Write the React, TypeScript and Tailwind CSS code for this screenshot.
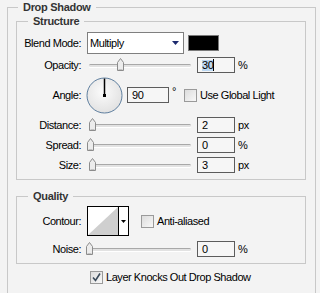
import React from 'react';

const labelCls = 'w-[64px] shrink-0 text-right';

function Thumb({ className }: { className: string }): React.JSX.Element {
  return (
    <svg className={`absolute top-0 ${className}`} width="7" height="13" viewBox="0 0 7 13">
      <path d="M0.5 12.5 V4.5 L3.5 0.5 L6.5 4.5 V12.5 Z" fill="#ececec" stroke="#8c8c8c" />
      <path d="M1.5 11.5 H5.5" stroke="#c4c4c4" />
    </svg>
  );
}

function Slider({ thumbClass }: { thumbClass: string }): React.JSX.Element {
  return (
    <div className="relative ml-[8px] h-[14px] w-[102px] shrink-0">
      <div className="absolute left-0 right-0 top-[6px] h-[3px] rounded-full border-t border-[#a8a8a8] bg-[#e2e2e2] shadow-[0_1px_0_#ffffff]" />
      <Thumb className={thumbClass} />
    </div>
  );
}

function NumberBox({ children }: { children: React.ReactNode }): React.JSX.Element {
  return (
    <div className="ml-[6px] flex h-[16px] w-[38px] shrink-0 items-center border border-[#5c5c5c] bg-[#f6f6f6] pl-[4px] leading-none">
      {children}
    </div>
  );
}

function CheckBox({ checked }: { checked?: boolean }): React.JSX.Element {
  return (
    <div className="flex h-[13px] w-[13px] shrink-0 items-center justify-center border border-[#9a9a9a] bg-gradient-to-br from-[#dcdcdc] to-[#f8f8f8]">
      {checked && (
        <svg width="9" height="9" viewBox="0 0 9 9">
          <path d="M1 4.5 L3.5 7.5 L8 0.5" fill="none" stroke="#3a4a5a" strokeWidth="1.6" />
        </svg>
      )}
    </div>
  );
}

function SliderRow({
  label,
  value,
  unit,
  thumbClass,
  className,
}: {
  label: string;
  value: string;
  unit: string;
  thumbClass: string;
  className: string;
}): React.JSX.Element {
  return (
    <div className={`flex h-[16px] items-center ${className}`}>
      <span className={labelCls}>{label}</span>
      <Slider thumbClass={thumbClass} />
      <NumberBox>{value}</NumberBox>
      <span className="ml-[3px]">{unit}</span>
    </div>
  );
}

export default function App(): React.JSX.Element {
  return (
    <div className="h-[293px] w-[320px] overflow-hidden bg-[#f3f3f3] pl-[7px] font-['Liberation_Sans',Arial,sans-serif] text-[11px] tracking-[-0.45px] text-black">
      <fieldset className="w-[309px] border border-[#c8c8c8]">
        <legend className="ml-[10px] px-[5px] font-bold leading-[14px] tracking-[-0.3px] text-[#333333]">Drop Shadow</legend>
        <div className="pb-[20px] pl-[8px] pr-[9px]">
          {/* Structure */}
          <fieldset className="w-[290px] border border-[#c8c8c8]">
            <legend className="ml-[11px] px-[5px] font-bold leading-[14px] tracking-[-0.3px] text-[#333333]">Structure</legend>
            <div className="pb-[6px]">
              <div className="mt-[4px] flex h-[22px] items-center">
                <span className={labelCls}>Blend Mode:</span>
                <div className="ml-[6px] flex h-[22px] w-[97px] items-center justify-between border border-[#7f7f7f] bg-white pl-[2px] pr-[4px]">
                  <span>Multiply</span>
                  <svg width="7" height="4" viewBox="0 0 7 4">
                    <path d="M0 0 H7 L3.5 4 Z" fill="#1c2a6e" />
                  </svg>
                </div>
                <div className="ml-[4px] h-[16px] w-[31px] border border-[#7a7a7a] bg-black" />
              </div>

              <div className="mt-[3px] flex h-[16px] items-center">
                <span className={labelCls}>Opacity:</span>
                <Slider thumbClass="left-[28px]" />
                <NumberBox>
                  <span className="bg-[#bcd8f2]">30</span>
                  <span className="h-[12px] w-px bg-black" />
                </NumberBox>
                <span className="ml-[3px]">%</span>
              </div>

              <div className="mt-[4px] flex h-[36px] items-center">
                <span className={labelCls}>Angle:</span>
                <svg className="ml-[5px] shrink-0" width="37" height="37" viewBox="0 0 37 37">
                  <defs>
                    <radialGradient id="dial" cx="0.45" cy="0.4" r="0.6">
                      <stop offset="0" stopColor="#fbfbfb" />
                      <stop offset="1" stopColor="#e2e2e2" />
                    </radialGradient>
                  </defs>
                  <circle cx="18.5" cy="18.5" r="17.5" fill="url(#dial)" stroke="#5f7f9f" />
                  <path d="M18.5 18.5 V1.5" stroke="#000" strokeWidth="1.5" />
                  <rect x="17" y="17" width="3" height="3" fill="#000" />
                </svg>
                <div className="ml-[4px] flex h-[16px] w-[42px] items-center border border-[#5c5c5c] bg-[#f6f6f6] pl-[4px] leading-none">
                  90
                </div>
                <span className="ml-[3px] self-start pt-[9px] leading-none">°</span>
                <div className="ml-[8px] flex items-center">
                  <CheckBox />
                  <span className="ml-[3px]">Use Global Light</span>
                </div>
              </div>

              <SliderRow label="Distance:" value="2" unit="px" thumbClass="left-[0px]" className="mt-[4px]" />
              <SliderRow label="Spread:" value="0" unit="%" thumbClass="left-[-2px]" className="mt-[4px]" />
              <SliderRow label="Size:" value="3" unit="px" thumbClass="left-[0px]" className="mt-[4px]" />
            </div>
          </fieldset>

          {/* Quality */}
          <fieldset className="mt-[9px] w-[290px] border border-[#c8c8c8]">
            <legend className="ml-[11px] px-[5px] font-bold leading-[14px] tracking-[-0.3px] text-[#333333]">Quality</legend>
            <div className="pb-[6px]">
              <div className="mt-[3px] flex h-[30px] items-center">
                <span className={labelCls}>Contour:</span>
                <div className="ml-[6px] flex h-[30px] w-[42px] border border-black bg-white">
                  <svg width="30" height="28" viewBox="0 0 30 28">
                    <path d="M0 28 L30 0 V28 Z" fill="#cfcfcf" />
                  </svg>
                  <div className="flex flex-1 items-center justify-center border-l border-black">
                    <svg width="5" height="3" viewBox="0 0 5 3">
                      <path d="M0 0 H5 L2.5 3 Z" fill="#000" />
                    </svg>
                  </div>
                </div>
                <div className="ml-[12px] flex items-center">
                  <CheckBox />
                  <span className="ml-[3px]">Anti-aliased</span>
                </div>
              </div>
              <SliderRow label="Noise:" value="0" unit="%" thumbClass="left-[-3px]" className="mt-[5px]" />
            </div>
          </fieldset>

          <div className="mt-[7px] flex h-[13px] items-center pl-[74px]">
            <CheckBox checked />
            <span className="ml-[3px]">Layer Knocks Out Drop Shadow</span>
          </div>
        </div>
      </fieldset>
    </div>
  );
}
